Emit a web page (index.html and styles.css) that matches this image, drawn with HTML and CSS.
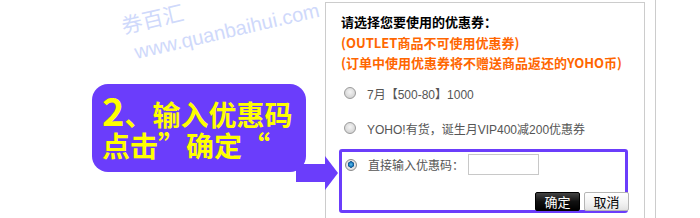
FILE: index.html
```html
<!DOCTYPE html>
<html lang="zh-CN">
<head>
<meta charset="utf-8">
<title>优惠券</title>
<link rel="stylesheet" href="styles.css">
</head>
<body>
<div class="page">
  <div class="panel">
    <p class="title">请选择您要使用的优惠券：</p>
    <p class="note">(OUTLET商品不可使用优惠券)</p>
    <p class="note">(订单中使用优惠券将不赠送商品返还的YOHO币)</p>
    <div class="opt opt-first"><span class="radio"></span><span>7月【500-80】1000</span></div>
    <div class="opt opt-second"><span class="radio"></span><span>YOHO!有货，诞生月VIP400减200优惠券</span></div>
    <div class="code-box">
      <div class="opt code-row"><span class="radio checked"></span><span>直接输入优惠码：</span><span class="input"></span></div>
      <div class="actions"><button class="btn btn-ok">确定</button><button class="btn btn-cancel">取消</button></div>
    </div>
  </div>

  <div class="watermark">
    <span class="wm-cn">券百汇</span>
    <span class="wm-url">www.quanbaihui.com</span>
  </div>

  <div class="callout">
    <div class="callout-line"><span class="big">2</span>、输入优惠码</div>
    <div class="callout-line">点击<span class="q q-close">”</span>确定<span class="q q-open">“</span></div>
  </div>
  <svg class="arrow" width="50" height="45" viewBox="0 0 50 45">
    <rect x="6" y="14" width="30" height="18" fill="#6b3dfb"/>
    <polygon points="35,6 48,23 35,40" fill="#6b3dfb"/>
  </svg>
</div>
</body>
</html>
```
FILE: styles.css
```css
html, body {
  margin: 0;
  padding: 0;
  background: #fff;
}
body {
  width: 700px;
  height: 218px;
  overflow: hidden;
  font-family: "Noto Sans CJK SC", sans-serif;
}
.page {
  position: relative;
  width: 655px;
  height: 216px;
  padding-top: 2px;
  border-right: 1px solid #ccc;
}
.panel {
  margin-left: 325px;
  width: 318px;
  height: 207px;
  border: 1px solid #ccc;
  border-bottom: 0;
  padding-top: 8px;
}
.title {
  margin: 0 0 0 15px;
  font-size: 13px;
  line-height: 22px;
  font-weight: 700;
  color: #000;
}
.note {
  margin: 0 0 0 15px;
  font-size: 13px;
  line-height: 20px;
  font-weight: 700;
  color: #ff6600;
}
.opt {
  display: flex;
  align-items: center;
  height: 20px;
  margin-left: 18px;
  font-family: "Liberation Sans", "Noto Sans CJK SC", sans-serif;
  font-size: 12px;
  color: #555;
}
.opt-first { margin-top: 10px; }
.opt-second { margin-top: 15px; }
.radio {
  width: 10px;
  height: 10px;
  margin-right: 11px;
  border: 1px solid #9a9a9a;
  border-radius: 50%;
  background: radial-gradient(circle at 50% 40%, #f4f4f4 0%, #d6d6d6 70%, #c4c4c4 100%);
  flex: none;
}
.radio.checked {
  border-color: #8a8a8a;
  background: radial-gradient(circle at 50% 45%, #5fc0f0 0%, #1877b8 28%, #0b4c86 40%, #e8e8e8 46%, #d0d0d0 100%);
}
.code-box {
  margin: 11px 0 0 13px;
  width: 283px;
  border: 3px solid #6b3dfb;
  border-radius: 3px;
}
.code-row {
  margin: 2px 0 0 3px;
  height: 21px;
}
.input {
  width: 69px;
  height: 19px;
  margin-left: 4px;
  border: 1px solid #c8c8c8;
  background: #fff;
}
.actions {
  display: flex;
  justify-content: flex-end;
  gap: 4px;
  margin: 17px -4px -1px 0;
}
.btn {
  width: 45px;
  height: 19px;
  padding: 0;
  font-family: "Noto Sans CJK SC", sans-serif;
  font-size: 13px;
  line-height: 17px;
  border-radius: 2px;
  cursor: pointer;
}
.btn-ok {
  color: #fff;
  border: 1px solid #000;
  background: linear-gradient(#444, #111 50%, #000);
}
.btn-cancel {
  color: #000;
  border: 1px solid #b5b5b5;
  background: linear-gradient(#fff, #f2f2f2 60%, #e2e2e2);
}
.watermark {
  position: absolute;
  left: 0;
  top: 0;
  width: 340px;
  height: 70px;
  color: #cfd9fb;
  pointer-events: none;
}
.wm-cn {
  position: absolute;
  left: 124px;
  top: 15px;
  font-family: "Noto Sans CJK SC", sans-serif;
  font-size: 21px;
  line-height: 21px;
  transform: rotate(-13deg);
  transform-origin: left bottom;
}
.wm-url {
  position: absolute;
  left: 137px;
  top: 42px;
  font-family: "Liberation Sans", sans-serif;
  font-size: 20px;
  line-height: 20px;
  white-space: nowrap;
  transform: rotate(-13deg);
  transform-origin: left bottom;
}
.callout {
  position: absolute;
  left: 92px;
  top: 84px;
  width: 204px;
  height: 73px;
  padding: 15px 0 0 10px;
  background: #6b3dfb;
  border-radius: 16px;
  color: #ffff00;
  font-family: "Noto Sans CJK SC", sans-serif;
  font-weight: 700;
  font-size: 28px;
  line-height: 31px;
  white-space: nowrap;
}
.big {
  font-size: 38px;
  line-height: 20px;
}
.q {
  display: inline-block;
  width: 28px;
}
.q-close { text-align: left; }
.q-open { text-align: right; }
.arrow {
  position: absolute;
  left: 290px;
  top: 150px;
}
```
